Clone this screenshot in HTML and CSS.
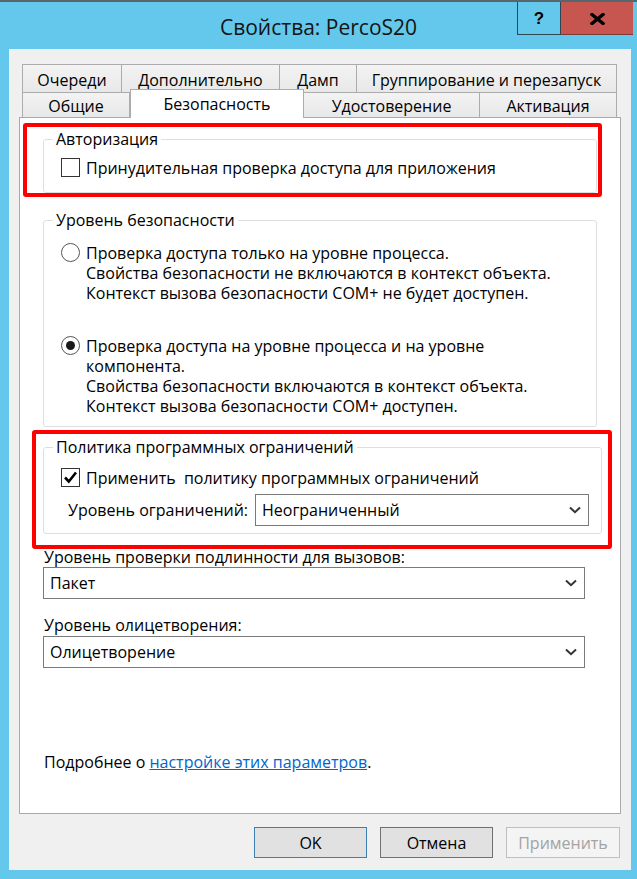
FILE: index.html
```html
<!DOCTYPE html>
<html lang="ru">
<head>
<meta charset="utf-8">
<title>Свойства: PercoS20</title>
<link rel="stylesheet" href="styles.css">
</head>
<body>
<div class="window">
  <div class="edge"></div>
  <header class="titlebar">
    <h1 class="title">Свойства: PercoS20</h1>
    <div class="caption">
      <button class="cap-btn help" type="button">?</button>
      <button class="cap-btn close" type="button" aria-label="Закрыть">
        <svg width="15" height="12" viewBox="0 0 15 12"><path d="M2 1.5 L13 10.5 M13 1.5 L2 10.5" stroke="#000" stroke-width="3.4" stroke-linecap="square" fill="none"/></svg>
      </button>
    </div>
  </header>

  <div class="client">
    <div class="tabs">
      <div class="tab-row back">
        <div class="tab t1">Очереди</div>
        <div class="tab t2">Дополнительно</div>
        <div class="tab t3">Дамп</div>
        <div class="tab t4">Группирование и перезапуск</div>
      </div>
      <div class="tab-row front">
        <div class="tab t5">Общие</div>
        <div class="tab t6 active">Безопасность</div>
        <div class="tab t7">Удостоверение</div>
        <div class="tab t8">Активация</div>
      </div>
    </div>

    <div class="panel">
      <fieldset class="group g-auth">
        <legend>Авторизация</legend>
        <div class="group-body">
          <label class="option"><span class="checkbox"></span><span>Принудительная проверка доступа для приложения</span></label>
        </div>
      </fieldset>

      <fieldset class="group g-level">
        <legend>Уровень безопасности</legend>
        <div class="group-body">
          <label class="option"><span class="radio"></span><span>Проверка доступа только на уровне процесса.<br>Свойства безопасности не включаются в контекст объекта.<br>Контекст вызова безопасности COM+ не будет доступен.</span></label>
          <label class="option second"><span class="radio checked"></span><span>Проверка доступа на уровне процесса и на уровне<br>компонента.<br>Свойства безопасности включаются в контекст объекта.<br>Контекст вызова безопасности COM+ доступен.</span></label>
        </div>
      </fieldset>

      <fieldset class="group g-policy">
        <legend>Политика программных ограничений</legend>
        <div class="group-body">
          <label class="option"><span class="checkbox checked"><svg width="17" height="17" viewBox="0 0 17 17"><path d="M3 8.5 L6.8 12.5 L14 3.5" stroke="#000" stroke-width="2.6" fill="none"/></svg></span><span>Применить&nbsp; политику программных ограничений</span></label>
          <div class="field-row">
            <span class="field-label">Уровень ограничений:</span>
            <div class="combo narrow"><span>Неограниченный</span><svg class="chev" width="12" height="8" viewBox="0 0 12 8"><path d="M1 1.5 L6 6.2 L11 1.5" stroke="#333" stroke-width="2" fill="none"/></svg></div>
          </div>
        </div>
      </fieldset>

      <div class="label first">Уровень проверки подлинности для вызовов:</div>
      <div class="combo wide"><span>Пакет</span><svg class="chev" width="12" height="8" viewBox="0 0 12 8"><path d="M1 1.5 L6 6.2 L11 1.5" stroke="#333" stroke-width="2" fill="none"/></svg></div>

      <div class="label second">Уровень олицетворения:</div>
      <div class="combo wide tight"><span>Олицетворение</span><svg class="chev" width="12" height="8" viewBox="0 0 12 8"><path d="M1 1.5 L6 6.2 L11 1.5" stroke="#333" stroke-width="2" fill="none"/></svg></div>

      <p class="more">Подробнее о <a class="link" href="#">настройке этих параметров</a>.</p>
    </div>

    <div class="buttons">
      <button class="btn default" type="button">OK</button>
      <button class="btn" type="button">Отмена</button>
      <button class="btn disabled" type="button" disabled>Применить</button>
    </div>
  </div>

  <div class="mark mark-auth"></div>
  <div class="mark mark-policy"></div>
</div>
</body>
</html>
```
FILE: styles.css
```css
* { box-sizing: border-box; }

html, body {
  margin: 0;
  padding: 0;
}

body {
  width: 637px;
  height: 879px;
  overflow: hidden;
  background: #63c8eb;
  font-family: "Open Sans", "Noto Sans", "DejaVu Sans", sans-serif;
  font-size: 16px;
  line-height: 20px;
  color: #000;
}

.window {
  position: relative;
  width: 637px;
  height: 879px;
  display: flex;
  flex-direction: column;
}

.edge {
  flex: none;
  height: 2px;
  background: #56666e;
}

.titlebar {
  flex: none;
  height: 47px;
  display: grid;
  grid-template-columns: 1fr auto 1fr;
}

.title {
  grid-column: 2;
  margin: 11px 0 0;
  font-size: 21px;
  font-weight: 400;
  line-height: 28px;
  color: #141414;
  white-space: nowrap;
}

.caption {
  grid-column: 3;
  justify-self: end;
  align-self: start;
  display: flex;
  height: 33px;
  margin-right: 4px;
}

.cap-btn {
  margin: 0;
  padding: 2px 0 0;
  border: 0;
  display: flex;
  align-items: center;
  justify-content: center;
  font-family: "Liberation Sans", sans-serif;
  cursor: default;
}

.help {
  width: 44px;
  background: transparent;
  border-left: 1px solid #2e4652;
  border-bottom: 1px solid #2e4652;
  border-right: 1px solid #2e4652;
  font-size: 17px;
  font-weight: 700;
  color: #000;
}

.close {
  width: 72px;
  background: #c75650;
  border-bottom: 1px solid #7d3b36;
}

.client {
  flex: 1;
  margin: 0 6px 9px 9px;
  padding: 15px 10px 0;
  background: #f0f0f0;
  display: flex;
  flex-direction: column;
}

.tabs {
  position: relative;
  z-index: 1;
  margin: 0 4px 0 3px;
  display: flex;
  flex-direction: column;
}

.tab-row { display: flex; }
.tab-row.back { height: 28px; }
.tab-row.front { height: 25px; }

.tab {
  border: 1px solid #acacac;
  border-bottom: 0;
  background: linear-gradient(#f3f3f3, #e8e8e8);
  display: flex;
  align-items: center;
  justify-content: center;
  padding-top: 2px;
  white-space: nowrap;
}

.tab + .tab { border-left: 0; }

.tab.active {
  height: 29px;
  margin: -3px 0 -1px;
  padding-top: 0;
  border-left: 1px solid #acacac;
  background: #fff;
}

.tab.active + .tab { border-left: 0; }

.t1 { width: 100px; }
.t2 { width: 158px; }
.t3 { width: 77px; }
.t4 { width: 260px; }
.t5 { width: 108px; }
.t6 { width: 174px; }
.t7 { width: 176px; }
.t8 { width: 137px; }

.panel {
  flex: none;
  height: 697px;
  background: #fff;
  border: 1px solid #a9a9a9;
  padding: 11px 23px 0;
  display: flex;
  flex-direction: column;
}

.group {
  margin: 0;
  padding: 0;
  min-width: 0;
  border: 1px solid #dcdfe2;
  border-radius: 3px;
}

.group legend {
  margin-left: 9px;
  padding: 0 3px;
  line-height: 20px;
}

.g-auth .group-body { padding: 9px 0 14px 17px; }

.g-level { margin-top: 17px; }
.g-level .group-body { padding: 13px 0 10px 17px; }

.g-policy {
  margin-top: 10px;
  margin-right: -5px;
}
.g-policy .group-body { padding: 11px 0 7px 17px; }

.option {
  display: flex;
  align-items: flex-start;
  gap: 6px;
}

.option.second { margin-top: 33px; }

.checkbox,
.radio {
  flex: none;
  width: 19px;
  height: 19px;
  background: #fff;
  border: 1px solid #333;
  display: flex;
  align-items: center;
  justify-content: center;
}

.radio {
  border-color: #555;
  border-radius: 50%;
}

.radio.checked::after {
  content: "";
  width: 9px;
  height: 9px;
  border-radius: 50%;
  background: #1a1a1a;
}

.field-row {
  display: flex;
  align-items: center;
  margin-top: 6px;
  padding-left: 7px;
}

.combo {
  height: 32px;
  border: 1px solid #7a7a7a;
  background: #fff;
  display: flex;
  align-items: center;
  justify-content: space-between;
  padding: 0 7px 0 6px;
}

.combo.narrow {
  width: 334px;
  margin-left: auto;
  margin-right: 12px;
}

.combo.wide { margin-right: 12px; }
.combo.tight { margin-top: 1px; }

.chev { flex: none; }

.label { padding-left: 1px; }
.label.first { margin-top: 13px; }
.label.second { margin-top: 16px; }

.more {
  margin: 84px 0 0;
  padding-left: 1px;
}

.link {
  color: #0066cc;
  text-decoration: underline;
}

.buttons {
  display: flex;
  justify-content: flex-end;
  gap: 13px;
  margin: 13px 1px 0 0;
}

.btn {
  width: 113px;
  height: 31px;
  margin: 0;
  padding: 0;
  border: 1px solid #707070;
  background: #e1e1e1;
  font: inherit;
  color: #000;
}

.btn.default { border-color: #3c7fb1; }

.btn.disabled {
  width: 114px;
  border-color: #bfbfbf;
  background: #f4f4f4;
  color: #a3a3a3;
}

.mark {
  position: absolute;
  border: 4px solid #ff0000;
  border-radius: 3px;
  pointer-events: none;
}

.mark-auth {
  left: 23px;
  top: 123px;
  width: 579px;
  height: 74px;
}

.mark-policy {
  left: 32px;
  top: 430px;
  width: 580px;
  height: 119px;
}
```
